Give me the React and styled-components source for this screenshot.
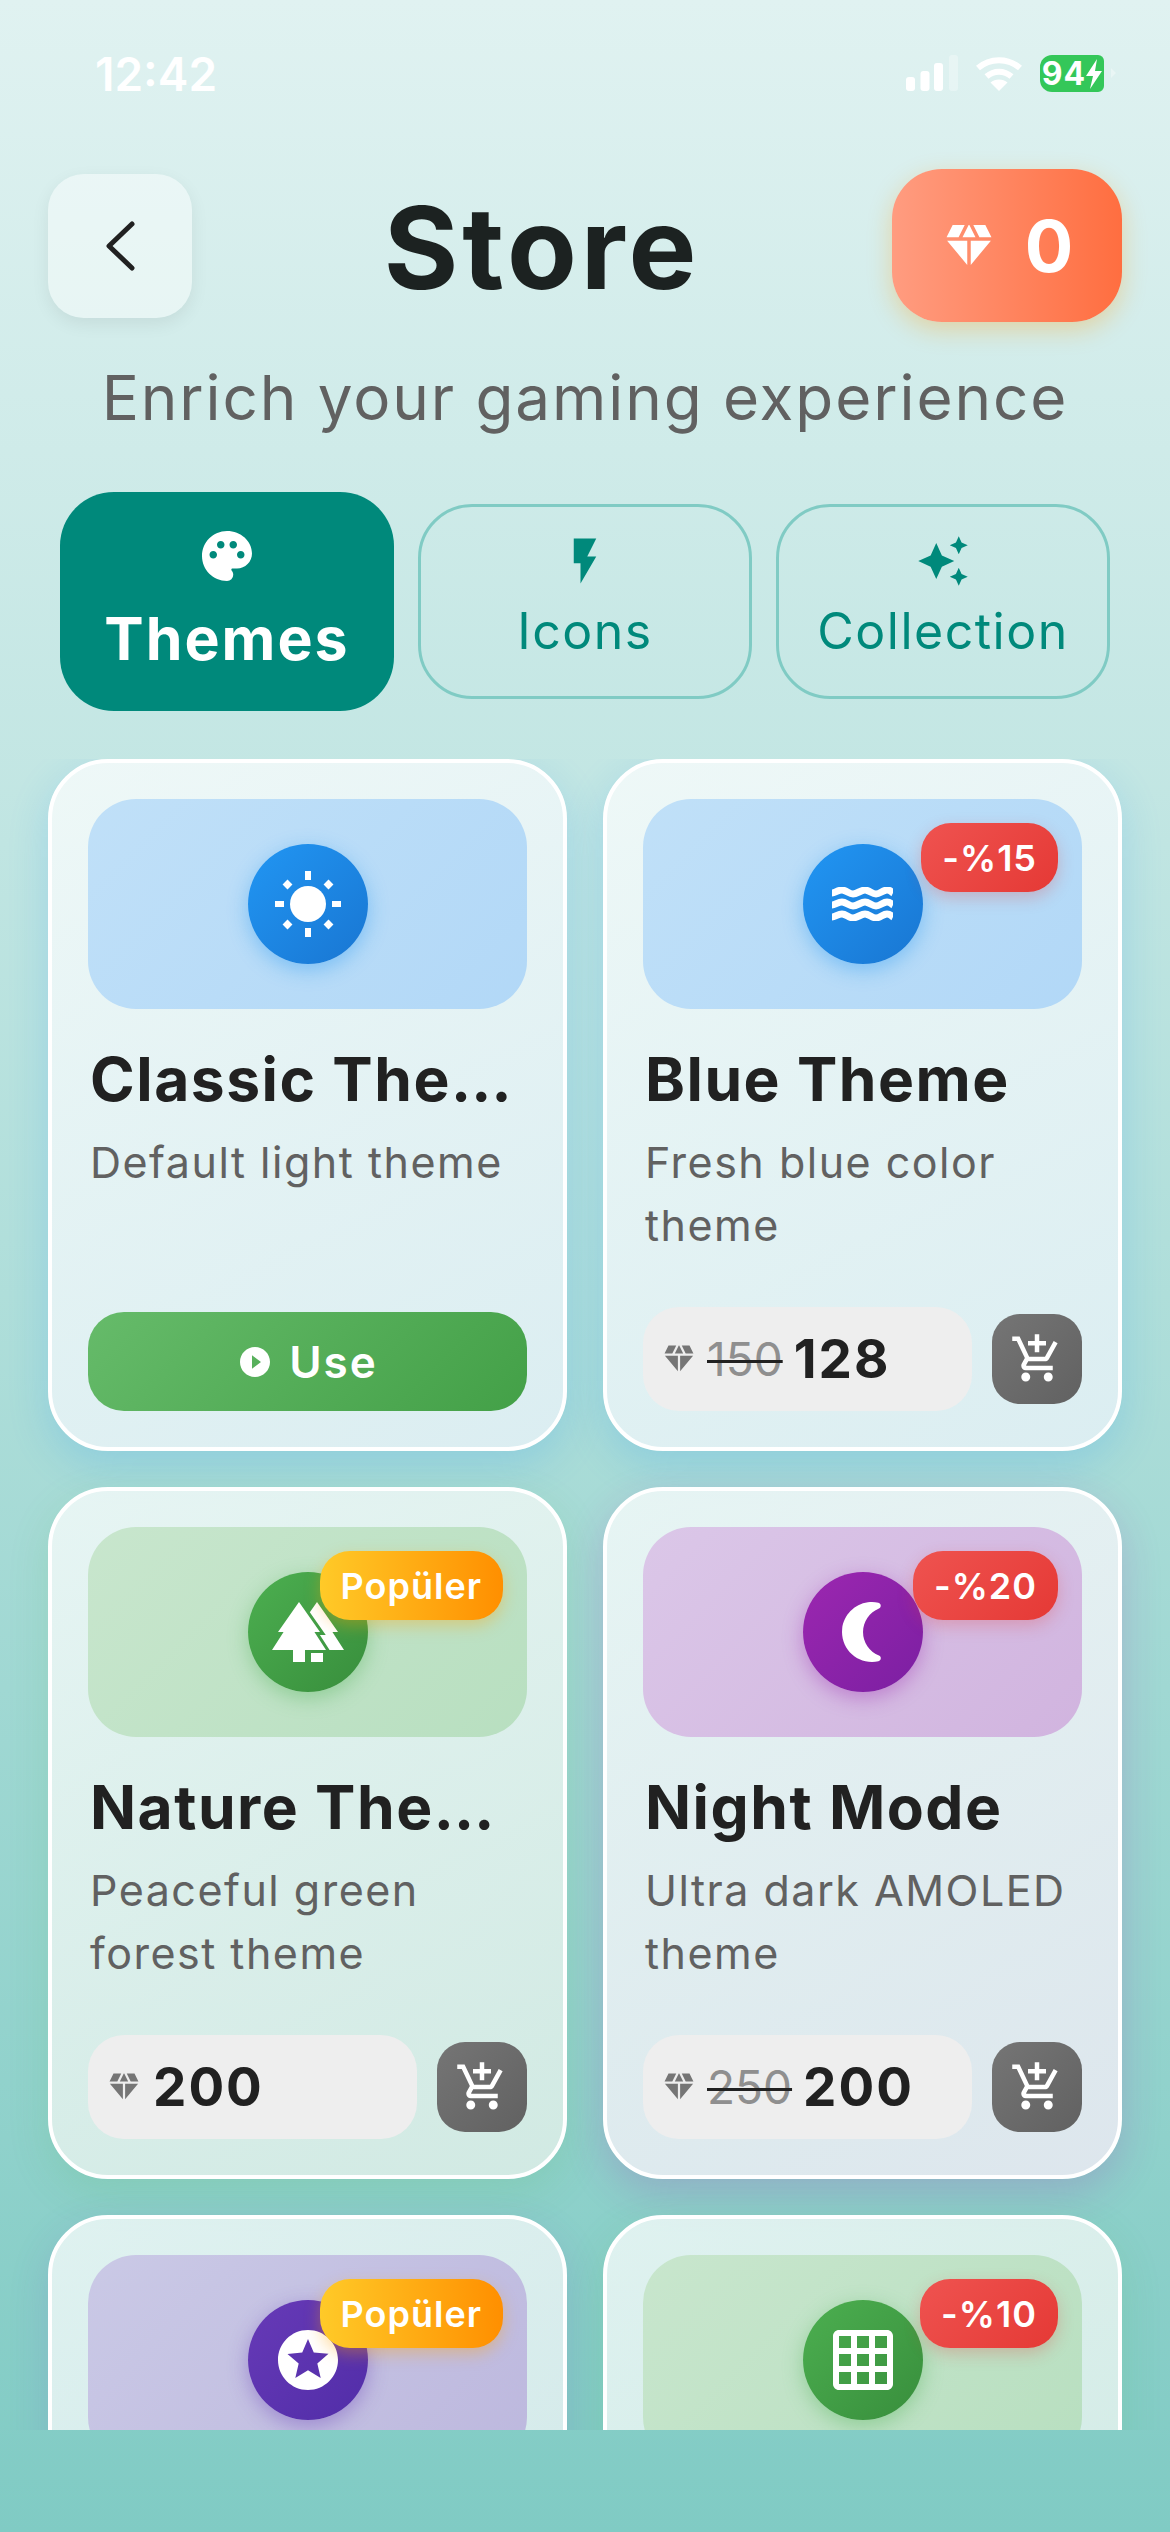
import React from 'react'
import styled, { createGlobalStyle } from 'styled-components'
import {
  MdAddShoppingCart,
  MdAutoAwesome,
  MdDiamond,
  MdFlashOn,
  MdForest,
  MdGridOn,
  MdNightlightRound,
  MdPalette,
  MdPlayCircleFilled,
  MdStars,
} from 'react-icons/md'

const GlobalStyle = createGlobalStyle`
  html, body {
    margin: 0;
    padding: 0;
  }
  body {
    font-family: Inter, 'Liberation Sans', sans-serif;
  }
`

const Screen = styled.div`
  width: 1170px;
  height: 2532px;
  overflow: hidden;
  display: flex;
  flex-direction: column;
  background: linear-gradient(180deg, #e0f2f1 0%, #80cbc4 100%);
  padding-bottom: 102px;
  box-sizing: border-box;
`

const StatusBar = styled.div`
  height: 169px;
  flex-shrink: 0;
  box-sizing: border-box;
  padding: 51px 66px 0 95px;
  display: flex;
  justify-content: space-between;
  align-items: flex-start;
`

const Clock = styled.div`
  color: white;
  font-size: 46px;
  font-weight: 600;
  line-height: 46px;
`

const StatusIcons = styled.div`
  display: flex;
  align-items: flex-start;
  padding-top: 4px;
  gap: 17px;
`

const Battery = styled.div`
  position: relative;
  width: 64px;
  height: 37px;
  background: #34c759;
  border-radius: 12px 6px 6px 12px;
  color: white;
  font-size: 32px;
  font-weight: 700;
  display: flex;
  align-items: center;
  justify-content: center;
  letter-spacing: 1px;

  &::after {
    content: '';
    position: absolute;
    left: 71px;
    top: 13px;
    border-left: 5px solid rgba(255, 255, 255, 0.35);
    border-top: 5px solid transparent;
    border-bottom: 5px solid transparent;
  }
`

const Header = styled.div`
  display: flex;
  justify-content: space-between;
  align-items: center;
  padding: 0 48px;
  flex-shrink: 0;
`

const BackButton = styled.div`
  width: 144px;
  height: 144px;
  border-radius: 36px;
  background: rgba(255, 255, 255, 0.45);
  box-shadow: 0 6px 18px rgba(0, 0, 0, 0.07);
  display: flex;
  align-items: center;
  justify-content: center;
`

const PageTitle = styled.h1`
  margin: 0;
  padding-top: 4px;
  font-size: 114px;
  font-weight: 700;
  letter-spacing: 4px;
  color: #1c2221;
  line-height: 149px;
`

const CoinBadge = styled.div`
  width: 230px;
  height: 153px;
  border-radius: 50px;
  background: linear-gradient(90deg, #ff9c80 0%, #ff6e40 100%);
  box-shadow: 0 8px 24px rgba(255, 152, 0, 0.3);
  color: white;
  font-size: 72px;
  font-weight: 700;
  display: flex;
  align-items: center;
  justify-content: center;
  gap: 28px;
`

const Subtitle = styled.div`
  text-align: center;
  font-size: 62px;
  line-height: 80px;
  letter-spacing: 1.9px;
  color: #616161;
  margin-top: 36px;
  flex-shrink: 0;
`

const Tabs = styled.div`
  display: grid;
  grid-template-columns: repeat(3, 1fr);
  align-items: center;
  gap: 24px;
  padding: 0 60px;
  margin-top: 54px;
  flex-shrink: 0;
`

const Tab = styled.div`
  height: ${(p) => (p.$active ? '219px' : '195px')};
  box-sizing: border-box;
  padding-bottom: ${(p) => (p.$active ? '6px' : '9px')};
  border-radius: 54px;
  background: ${(p) => (p.$active ? '#00897b' : 'transparent')};
  border: ${(p) => (p.$active ? 'none' : '3px solid #80cbc4')};
  color: ${(p) => (p.$active ? 'white' : '#00897b')};
  display: flex;
  flex-direction: column;
  align-items: center;
  justify-content: center;
  gap: ${(p) => (p.$active ? '20px' : '13px')};
`

const TabLabel = styled.div`
  font-size: ${(p) => (p.$active ? '59px' : '50px')};
  font-weight: ${(p) => (p.$active ? 700 : 400)};
  letter-spacing: ${(p) => (p.$active ? '2px' : '1.5px')};
  line-height: ${(p) => (p.$active ? '66px' : '60px')};
`

const ScrollArea = styled.div`
  flex: 1;
  min-height: 0;
  overflow: hidden;
  margin-top: 48px;
`

const Grid = styled.div`
  display: grid;
  grid-template-columns: 519px 519px;
  column-gap: 36px;
  row-gap: 36px;
  padding: 0 48px;
`

const Card = styled.div`
  height: 692px;
  box-sizing: border-box;
  padding: 36px;
  border: 4px solid white;
  border-radius: 60px;
  background: linear-gradient(145deg, rgba(255, 255, 255, 0.72) 0%, ${(p) => p.$tint} 100%);
  box-shadow: 0 14px 40px ${(p) => p.$shadow};
  display: flex;
  flex-direction: column;
`

const Preview = styled.div`
  position: relative;
  height: 210px;
  flex-shrink: 0;
  border-radius: 48px;
  background: linear-gradient(135deg, ${(p) => p.$from}, ${(p) => p.$to});
  display: flex;
  align-items: center;
  justify-content: center;
`

const IconCircle = styled.div`
  width: 120px;
  height: 120px;
  border-radius: 50%;
  background: linear-gradient(135deg, ${(p) => p.$from}, ${(p) => p.$to});
  box-shadow: 0 6px 20px ${(p) => p.$from}66;
  color: white;
  display: flex;
  align-items: center;
  justify-content: center;
`

const Badge = styled.div`
  position: absolute;
  top: 24px;
  right: 24px;
  height: 69px;
  padding: 0 21px;
  border-radius: 30px;
  background: ${(p) =>
    p.$popular
      ? 'linear-gradient(90deg, #ffca28, #ff8f00)'
      : 'linear-gradient(135deg, #ef5350, #e53935)'};
  box-shadow: 0 6px 16px ${(p) => (p.$popular ? 'rgba(255, 160, 0, 0.35)' : 'rgba(229, 57, 53, 0.25)')};
  color: white;
  font-size: 36px;
  font-weight: 600;
  letter-spacing: 1px;
  display: flex;
  align-items: center;
`

const CardTitle = styled.div`
  margin: 35px 0 0 2px;
  font-size: 60.5px;
  font-weight: 700;
  letter-spacing: 1.5px;
  line-height: 70px;
  color: #212121;
  white-space: nowrap;
`

const CardDesc = styled.div`
  margin: 17px 0 0 2px;
  font-size: 43px;
  line-height: 63px;
  letter-spacing: 1.5px;
  color: #616161;
`

const Footer = styled.div`
  margin-top: auto;
  display: flex;
  align-items: center;
  justify-content: space-between;
`

const PricePill = styled.div`
  width: 329px;
  height: 104px;
  box-sizing: border-box;
  padding-left: 18px;
  border-radius: 36px;
  background: #eeeeee;
  display: flex;
  align-items: center;
  color: #757575;
`

const OldPrice = styled.span`
  margin-left: 10px;
  font-size: 46px;
  color: #8f8f8f;
  text-decoration: line-through #212121 3px;
`

const Price = styled.span`
  margin-left: 11px;
  font-size: 53px;
  font-weight: 700;
  letter-spacing: 2px;
  color: #212121;
`

const CartButton = styled.div`
  width: 90px;
  height: 90px;
  border-radius: 28px;
  background: linear-gradient(135deg, #757575, #616161);
  color: white;
  display: flex;
  align-items: center;
  justify-content: center;
`

const UseButton = styled.div`
  width: 100%;
  height: 99px;
  border-radius: 36px;
  background: linear-gradient(135deg, #66bb6a, #43a047);
  color: white;
  font-size: 44px;
  font-weight: 600;
  letter-spacing: 2px;
  display: flex;
  align-items: center;
  justify-content: center;
  gap: 16px;
`

const BLUE = {
  tint: 'rgba(226, 240, 245, 0.88)',
  shadow: 'rgba(33, 150, 243, 0.2)',
  previewFrom: '#c0e0f8',
  previewTo: '#b2d8f7',
  from: '#2196f3',
  to: '#1976d2',
}
const GREEN = {
  tint: 'rgba(221, 238, 231, 0.85)',
  shadow: 'rgba(76, 175, 80, 0.15)',
  previewFrom: '#c8e6cd',
  previewTo: '#b8dfc0',
  from: '#4caf50',
  to: '#388e3c',
}
const PURPLE = {
  tint: 'rgba(228, 232, 240, 0.92)',
  shadow: 'rgba(156, 39, 176, 0.2)',
  previewFrom: '#dbc7e8',
  previewTo: '#d1b4df',
  from: '#9c27b0',
  to: '#7b1fa2',
}
const INDIGO = {
  tint: 'rgba(222, 235, 238, 0.85)',
  shadow: 'rgba(103, 58, 183, 0.15)',
  previewFrom: '#cac9e6',
  previewTo: '#bdb8de',
  from: '#673ab7',
  to: '#512da8',
}

const SunIcon = () => (
  <svg width="72" height="72" viewBox="0 0 72 72" fill="white">
    <circle cx="36" cy="36" r="18" />
    <rect x="33" y="3" width="6" height="9" />
    <rect x="33" y="60" width="6" height="9" />
    <rect x="3" y="33" width="9" height="6" />
    <rect x="60" y="33" width="9" height="6" />
    <rect x="12" y="13" width="7" height="7" transform="rotate(45 15.5 16.5)" />
    <rect x="53" y="13" width="7" height="7" transform="rotate(45 56.5 16.5)" />
    <rect x="12" y="53" width="7" height="7" transform="rotate(45 15.5 56.5)" />
    <rect x="53" y="53" width="7" height="7" transform="rotate(45 56.5 56.5)" />
  </svg>
)

const waveBand = (y) =>
  `M0 ${y + 1} C3 ${y + 1} 6 ${y - 2} 10 ${y - 2} S17 ${y + 2} 21 ${y + 2} S29 ${y - 2} 33 ${y - 2} S40 ${y + 2} 44 ${y + 2} S51 ${y - 2} 55 ${y - 2} S59 ${y} 61 ${y + 1}`

const WavesIcon = () => (
  <svg width="61" height="34" viewBox="0 0 61 34" fill="none" stroke="white" strokeWidth="7">
    <path d={waveBand(5)} />
    <path d={waveBand(17)} />
    <path d={waveBand(29)} />
  </svg>
)

const ForestIcon = () => <MdForest size={72} />
const MoonIcon = () => <MdNightlightRound size={72} />
const StarIcon = () => <MdStars size={72} />
const GridIcon = () => <MdGridOn size={72} />

const themes = [
  { title: 'Classic The…', desc: 'Default light theme', colors: BLUE, Icon: SunIcon, owned: true },
  { title: 'Blue Theme', desc: 'Fresh blue color theme', colors: BLUE, Icon: WavesIcon, old: 150, price: 128, badge: '-%15' },
  { title: 'Nature The…', desc: 'Peaceful green forest theme', colors: GREEN, Icon: ForestIcon, price: 200, badge: 'Popüler', popular: true },
  { title: 'Night Mode', desc: 'Ultra dark AMOLED theme', colors: PURPLE, Icon: MoonIcon, old: 250, price: 200, badge: '-%20' },
  { colors: INDIGO, Icon: StarIcon, badge: 'Popüler', popular: true },
  { colors: GREEN, Icon: GridIcon, badge: '-%10' },
]

const SignalIcon = () => (
  <svg width="52" height="36" viewBox="0 0 52 36">
    <rect x="0" y="22" width="9" height="14" rx="3" fill="white" />
    <rect x="14.5" y="16" width="9" height="20" rx="3" fill="white" />
    <rect x="28" y="8" width="9" height="28" rx="3" fill="white" />
    <rect x="43" y="0" width="9" height="36" rx="3" fill="white" fillOpacity="0.3" />
  </svg>
)

const WifiIcon = () => (
  <svg width="48" height="36" viewBox="0 0 48 36" fill="none">
    <path d="M3 13 C15 2.5 33 2.5 45 13" stroke="white" strokeWidth="6" />
    <path d="M11.5 21.5 C19 15 29 15 36.5 21.5" stroke="white" strokeWidth="6" />
    <path d="M24 36 L15.5 27.5 C20 23.5 28 23.5 32.5 27.5 Z" fill="white" />
  </svg>
)

const BoltGlyph = () => (
  <svg width="16" height="30" viewBox="0 0 16 30">
    <path d="M11 0 L0 17 H7 L4 30 L16 12 H9 Z" fill="white" />
  </svg>
)

const BackChevron = () => (
  <svg width="30" height="50" viewBox="0 0 30 50" fill="none">
    <path d="M27 3 L4 25 L27 47" stroke="#212121" strokeWidth="5" strokeLinecap="round" strokeLinejoin="round" />
  </svg>
)

const ThemeCard = ({ item }) => {
  const { colors, Icon } = item
  return (
    <Card $tint={colors.tint} $shadow={colors.shadow}>
      <Preview $from={colors.previewFrom} $to={colors.previewTo}>
        <IconCircle $from={colors.from} $to={colors.to}>
          <Icon />
        </IconCircle>
        {item.badge && <Badge $popular={item.popular}>{item.badge}</Badge>}
      </Preview>
      {item.title && <CardTitle>{item.title}</CardTitle>}
      {item.desc && <CardDesc>{item.desc}</CardDesc>}
      {item.owned && (
        <Footer>
          <UseButton>
            <MdPlayCircleFilled size={36} />
            Use
          </UseButton>
        </Footer>
      )}
      {item.price && (
        <Footer>
          <PricePill>
            <MdDiamond size={36} />
            {item.old && <OldPrice>{item.old}</OldPrice>}
            <Price>{item.price}</Price>
          </PricePill>
          <CartButton>
            <MdAddShoppingCart size={54} />
          </CartButton>
        </Footer>
      )}
    </Card>
  )
}

const App = () => {
  return (
    <Screen>
      <GlobalStyle />
      <StatusBar>
        <Clock>12:42</Clock>
        <StatusIcons>
          <SignalIcon />
          <WifiIcon />
          <Battery>
            94
            <BoltGlyph />
          </Battery>
        </StatusIcons>
      </StatusBar>
      <Header>
        <BackButton>
          <BackChevron />
        </BackButton>
        <PageTitle>Store</PageTitle>
        <CoinBadge>
          <MdDiamond size={56} />0
        </CoinBadge>
      </Header>
      <Subtitle>Enrich your gaming experience</Subtitle>
      <Tabs>
        <Tab $active>
          <MdPalette size={60} />
          <TabLabel $active>Themes</TabLabel>
        </Tab>
        <Tab>
          <MdFlashOn size={54} />
          <TabLabel>Icons</TabLabel>
        </Tab>
        <Tab>
          <MdAutoAwesome size={54} />
          <TabLabel>Collection</TabLabel>
        </Tab>
      </Tabs>
      <ScrollArea>
        <Grid>
          {themes.map((item, i) => (
            <ThemeCard key={i} item={item} />
          ))}
        </Grid>
      </ScrollArea>
    </Screen>
  )
}

export default App
